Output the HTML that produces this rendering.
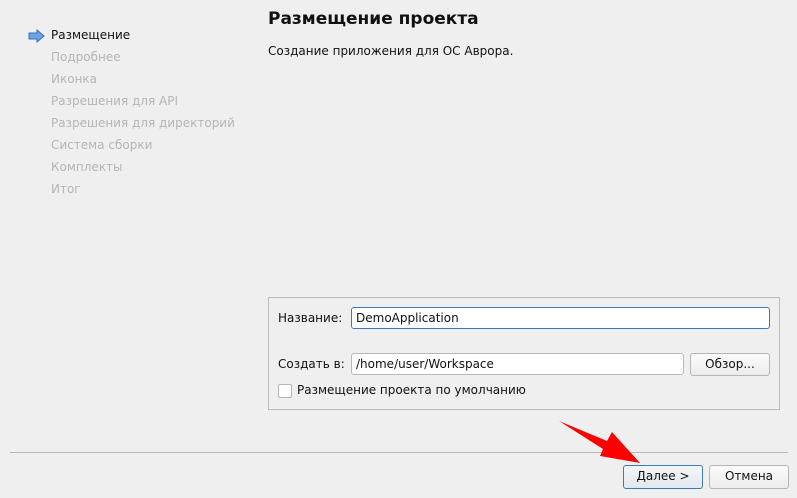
<!DOCTYPE html>
<html><head><meta charset="utf-8"><style>
body{margin:0;width:797px;height:498px;background:#efefef;font-family:"DejaVu Sans","Liberation Sans",sans-serif;font-size:12px;color:#111;position:relative;overflow:hidden}
.a{position:absolute;white-space:nowrap}
.nav{left:51px;color:#b5b5b5}
.inp{position:absolute;background:#fff;border:1px solid #b8b8b8;border-radius:3px;box-sizing:border-box;padding-left:4px;line-height:20px}
.btn{position:absolute;border:1px solid #b5b5b5;border-radius:3px;background:linear-gradient(#fbfbfb,#ececec);box-sizing:border-box;text-align:center;line-height:21px}
</style></head><body>
<svg class="a" style="left:28px;top:29px" width="18" height="14"><path d="M1 4h8V1l7 6-7 6V10H1z" fill="#6ea2e6" stroke="#3a6cb8" stroke-width="1"/></svg>
<div class="a" style="left:51px;top:28px">Размещение</div>
<div class="a nav" style="top:50px">Подробнее</div>
<div class="a nav" style="top:72px">Иконка</div>
<div class="a nav" style="top:94px">Разрешения для API</div>
<div class="a nav" style="top:116px">Разрешения для директорий</div>
<div class="a nav" style="top:138px">Система сборки</div>
<div class="a nav" style="top:160px">Комплекты</div>
<div class="a nav" style="top:182px">Итог</div>
<div class="a" style="left:268px;top:9px;font-size:17px;font-weight:bold">Размещение проекта</div>
<div class="a" style="left:268px;top:44px">Создание приложения для ОС Аврора.</div>
<div class="a" style="left:268px;top:297px;width:512px;height:113px;border:1px solid #bdbdbd;box-sizing:border-box"></div>
<div class="a" style="left:278px;top:311px">Название:</div>
<div class="inp" style="left:351px;top:307px;width:419px;height:22px;border-color:#3d7ab8">DemoApplication</div>
<div class="a" style="left:278px;top:357px">Создать в:</div>
<div class="inp" style="left:351px;top:353px;width:333px;height:22px">/home/user/Workspace</div>
<div class="btn" style="left:690px;top:353px;width:80px;height:23px">Обзор...</div>
<div class="a" style="left:278px;top:384px;width:12px;height:12px;border:1px solid #b5b5b5;background:#fff;border-radius:2px"></div>
<div class="a" style="left:297px;top:383px">Размещение проекта по умолчанию</div>
<div class="a" style="left:10px;top:452px;width:778px;height:1px;background:#b9b9b9"></div>
<div class="btn" style="left:623px;top:465px;width:80px;height:24px;border-color:#3d7ab8;background:linear-gradient(#f4f7fa,#e3e8ee)"><u>Д</u>алее &gt;</div>
<div class="btn" style="left:709px;top:465px;width:80px;height:24px">Отмена</div>
<svg class="a" style="left:0;top:0" width="797" height="498"><polygon points="559,421 607,441 612,432 640,463 600,456 603,449" fill="#ff0000"/></svg>
</body></html>
